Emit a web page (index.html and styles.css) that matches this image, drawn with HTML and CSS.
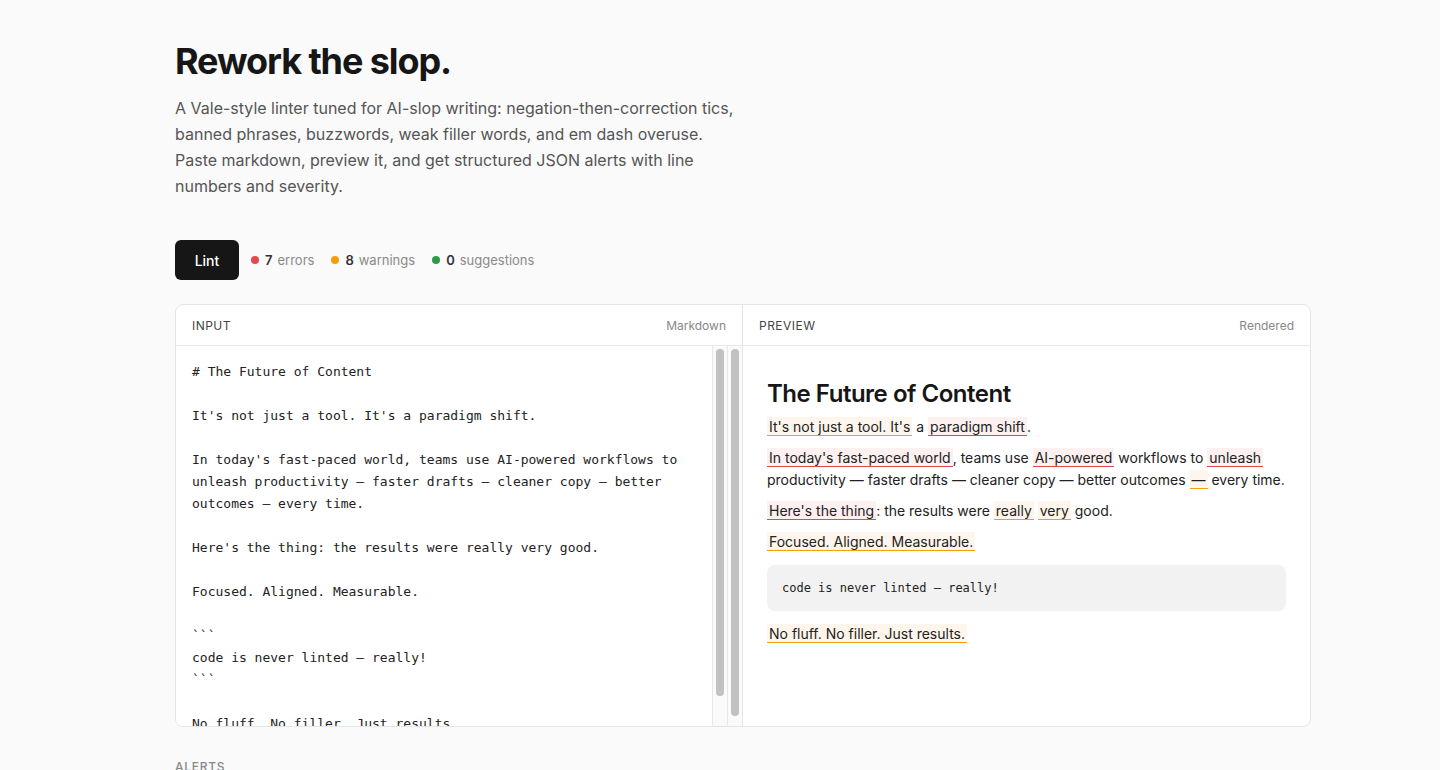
FILE: index.html
```html
<!DOCTYPE html>
<html lang="en">
<head>
    <meta charset="UTF-8">
    <meta name="viewport" content="width=device-width, initial-scale=1.0">
    <title>Rework the slop</title>
    <link rel="stylesheet" href="styles.css">
</head>
<body>
    <main class="page">
        <h1 class="title">Rework the slop.</h1>
        <p class="lede">A Vale-style linter tuned for AI-slop writing: negation-then-correction tics, banned phrases, buzzwords, weak filler words, and em dash overuse. Paste markdown, preview it, and get structured JSON alerts with line numbers and severity.</p>

        <!-- Lint action + summary counts -->
        <div class="toolbar">
            <button type="button" class="lint-button">Lint</button>
            <div class="stats">
                <span class="stat"><i class="dot dot-error"></i><b>7</b> errors</span>
                <span class="stat"><i class="dot dot-warn"></i><b>8</b> warnings</span>
                <span class="stat"><i class="dot dot-ok"></i><b>0</b> suggestions</span>
            </div>
        </div>

        <section class="panels">
            <div class="panel">
                <div class="panel-head">
                    <span class="panel-title">Input</span>
                    <span class="panel-note">Markdown</span>
                </div>
                <div class="panel-body">
                    <textarea class="editor" spellcheck="false"># The Future of Content

It's not just a tool. It's a paradigm shift.

In today's fast-paced world, teams use AI-powered workflows to unleash productivity — faster drafts — cleaner copy — better outcomes — every time.

Here's the thing: the results were really very good.

Focused. Aligned. Measurable.

&#96;&#96;&#96;
code is never linted — really!
&#96;&#96;&#96;

No fluff. No filler. Just results.</textarea>
                    <div class="track"><div class="thumb thumb-inner"></div></div>
                    <div class="track"><div class="thumb thumb-outer"></div></div>
                </div>
            </div>

            <div class="panel">
                <div class="panel-head">
                    <span class="panel-title">Preview</span>
                    <span class="panel-note">Rendered</span>
                </div>
                <div class="preview">
                    <h2>The Future of Content</h2>
                    <p><span class="hl warn">It's not just a tool. It's</span> a <span class="hl err">paradigm shift</span>.</p>
                    <p><span class="hl err">In today's fast-paced world</span>, teams use <span class="hl err">AI-powered</span> workflows to <span class="hl err">unleash</span> productivity — faster drafts — cleaner copy — better outcomes <span class="hl warn">—</span> every time.</p>
                    <p><span class="hl err">Here's the thing</span>: the results were <span class="hl warn">really</span> <span class="hl warn">very</span> good.</p>
                    <p><span class="hl warn">Focused. Aligned. Measurable.</span></p>
                    <pre>code is never linted — really!</pre>
                    <p><span class="hl warn">No fluff. No filler. Just results.</span></p>
                </div>
            </div>
        </section>

        <h3 class="section-label">Alerts</h3>
    </main>
</body>
</html>
```

FILE: styles.css
```css
body {
    font-family: Inter, "Noto Sans", sans-serif;
    margin: 0;
    padding: 0;
    background-color: #fafafa;
    color: #1a1a1a;
}

.page {
    width: 1136px;
    margin-left: 175px;
    padding-top: 40px;
}

.title {
    margin: 0;
    font-size: 36px;
    line-height: 43px;
    font-weight: 700;
    letter-spacing: -0.03em;
    color: #161616;
}

.lede {
    max-width: 572.5px;
    margin: 12px 0 0;
    font-size: 16px;
    line-height: 26px;
    color: #555;
}

.toolbar {
    display: flex;
    align-items: center;
    gap: 12px;
    margin-top: 41px;
}

.stats {
    display: flex;
    gap: 17px;
}

.lint-button {
    width: 64px;
    height: 40px;
    border: none;
    border-radius: 6px;
    background-color: #161616;
    color: #fff;
    font-family: inherit;
    font-size: 14px;
    font-weight: 500;
    cursor: pointer;
}

.stat {
    display: flex;
    align-items: center;
    font-size: 13px;
    color: #8a8a8a;
}

.stat b {
    color: #333;
    font-weight: 600;
    margin-right: 5px;
}

.dot {
    width: 8px;
    height: 8px;
    border-radius: 50%;
    margin-right: 6px;
}

.dot-error { background-color: #e5484d; }
.dot-warn { background-color: #f59e0b; }
.dot-ok { background-color: #2f9a48; }

.panels {
    display: grid;
    grid-template-columns: 566px 1fr;
    margin-top: 24px;
    background: #fff;
    border: 1px solid #e5e5e5;
    border-radius: 8px;
    overflow: hidden;
}

.panel + .panel {
    border-left: 1px solid #e5e5e5;
}

.panel-head {
    display: flex;
    justify-content: space-between;
    align-items: center;
    height: 40px;
    padding: 0 16px;
    border-bottom: 1px solid #e8e8e8;
    font-size: 12px;
}

.panel-title {
    text-transform: uppercase;
    letter-spacing: 0.04em;
    color: #444;
    font-weight: 400;
}

.panel-note {
    color: #888;
}

.panel-body {
    display: flex;
    height: 380px;
}

.editor {
    flex: 1;
    height: 380px;
    box-sizing: border-box;
    margin: 0;
    padding: 15px 16px 16px;
    border: none;
    outline: none;
    resize: none;
    overflow: hidden;
    font-family: "DejaVu Sans Mono", monospace;
    font-size: 13px;
    line-height: 22px;
    color: #222;
    background: #fff;
}

.track {
    width: 14px;
    border-left: 1px solid #e8e8e8;
    background-color: #fafafa;
    display: flex;
    justify-content: center;
    padding-top: 3px;
}

.thumb {
    width: 8px;
    border-radius: 4px;
    background-color: #c1c1c1;
}

.thumb-inner { height: 347px; }
.thumb-outer { height: 367px; }

.preview {
    padding: 24px;
    font-size: 14px;
    line-height: 22px;
    color: #222;
}

.preview h2 {
    margin: 8px 0 6px;
    font-size: 24px;
    line-height: 32px;
    font-weight: 600;
    letter-spacing: -0.02em;
    color: #161616;
}

.preview p {
    margin: 0 0 9px;
}

.hl {
    padding: 1px 2px 0;
    border-bottom: 1.5px solid;
}

.hl.err {
    background-color: #fcf0f0;
    border-color: #e5484d;
}

.hl.warn {
    background-color: #fef6ec;
    border-color: #f59e0b;
}

.preview pre {
    margin: 12px 0;
    padding: 14px 15px;
    border-radius: 8px;
    background-color: #f2f2f2;
    font-family: "DejaVu Sans Mono", monospace;
    font-size: 12px;
    line-height: 18px;
    color: #222;
}

.section-label {
    margin: 32px 0 0;
    font-size: 12px;
    font-weight: 500;
    letter-spacing: 0.06em;
    text-transform: uppercase;
    color: #888;
}
```
